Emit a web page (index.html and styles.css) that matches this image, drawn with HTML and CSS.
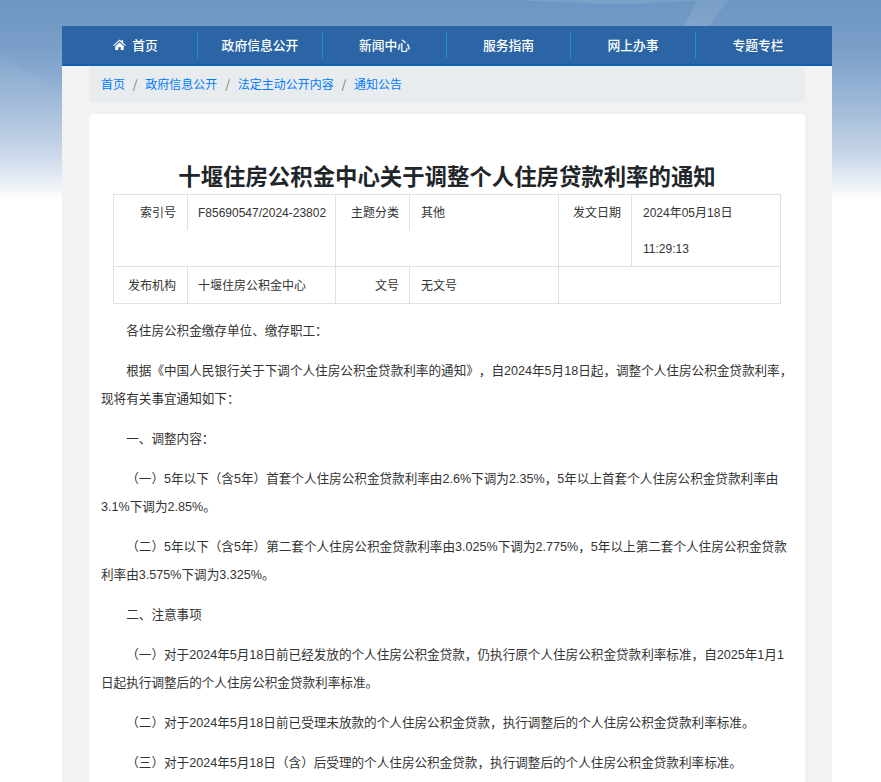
FILE: index.html
```html
<!DOCTYPE html>
<html lang="zh-CN">
<head>
<meta charset="utf-8">
<title>十堰住房公积金中心关于调整个人住房贷款利率的通知</title>
<link rel="stylesheet" href="styles.css">
</head>
<body>
<div class="bg" aria-hidden="true">
<svg width="881" height="200" viewBox="0 0 881 200" preserveAspectRatio="none">
<path class="swoosh" d="M520 0C590 5 650 5 700 0Z"/>
<path class="swoosh" d="M697 0H730C715 15 705 30 698 50H676C682 30 690 15 697 0Z"/>
<path class="swoosh2" d="M0 55C60 90 120 130 190 190H0Z"/>
</svg>
</div>
<div class="wrap">
<nav class="nav">
<a class="nav-item nav-home"><svg class="home" viewBox="0 0 16 14"><path d="M8 0.6 10.6 3V1.6h2v3.2L16 8l-.9 1L8 2.6.9 9 0 8ZM2.6 9.2 8 4.4l5.4 4.8V14H9.6v-3.6H6.4V14H2.6Z"/></svg>首页</a>
<a class="nav-item">政府信息公开</a>
<a class="nav-item">新闻中心</a>
<a class="nav-item">服务指南</a>
<a class="nav-item">网上办事</a>
<a class="nav-item">专题专栏</a>
</nav>
<div class="inner">
<ol class="crumbs">
<li><a>首页</a></li>
<li><a>政府信息公开</a></li>
<li><a>法定主动公开内容</a></li>
<li><a>通知公告</a></li>
</ol>
<article class="card">
<h1 class="title">十堰住房公积金中心关于调整个人住房贷款利率的通知</h1>
<div class="meta">
<div class="cell c1"><span class="k">索引号</span><span class="v">F85690547/2024-23802</span></div>
<div class="cell c2"><span class="k">主题分类</span><span class="v">其他</span></div>
<div class="cell c3"><span class="k">发文日期</span><span class="v">2024年05月18日<br>11:29:13</span></div>
<div class="cell c1"><span class="k">发布机构</span><span class="v">十堰住房公积金中心</span></div>
<div class="cell c2"><span class="k">文号</span><span class="v">无文号</span></div>
<div class="cell c3 empty"></div>
</div>
<div class="body">
<p class="in">各住房公积金缴存单位、缴存职工：</p>
<p class="in">根据《中国人民银行关于下调个人住房公积金贷款利率的通知》，自2024年5月18日起，调整个人住房公积金贷款利率，现将有关事宜通知如下：</p>
<p class="in">一、调整内容：</p>
<p class="in">（一）5年以下（含5年）首套个人住房公积金贷款利率由2.6%下调为2.35%，5年以上首套个人住房公积金贷款利率由3.1%下调为2.85%。</p>
<p class="in">（二）5年以下（含5年）第二套个人住房公积金贷款利率由3.025%下调为2.775%，5年以上第二套个人住房公积金贷款利率由3.575%下调为3.325%。</p>
<p class="in">二、注意事项</p>
<p class="in">（一）对于2024年5月18日前已经发放的个人住房公积金贷款，仍执行原个人住房公积金贷款利率标准，自2025年1月1日起执行调整后的个人住房公积金贷款利率标准。</p>
<p class="in">（二）对于2024年5月18日前已受理未放款的个人住房公积金贷款，执行调整后的个人住房公积金贷款利率标准。</p>
<p class="in">（三）对于2024年5月18日（含）后受理的个人住房公积金贷款，执行调整后的个人住房公积金贷款利率标准。</p>
</div>
</article>
</div>
</div>
</body>
</html>
```
FILE: styles.css
```css
html { overflow: hidden; height: 782px; }
body {
  margin: 0;
  height: 782px;
  overflow: hidden;
  position: relative;
  background: #fff;
  font-family: "Noto Sans CJK SC", "Noto Sans", sans-serif;
  font-size: 12px;
  color: #333;
  text-spacing-trim: space-all;
}
.bg {
  position: absolute;
  inset: 0 0 auto 0;
  height: 200px;
  background: linear-gradient(180deg, #6c96c2 0%, #7a9fc9 25%, #a3bcd9 55%, #c9d7e9 78%, #fff 100%);
}
.bg svg { display: block; }
.swoosh { fill: rgba(255,255,255,.1); }
.swoosh2 { fill: rgba(255,255,255,.05); }
.wrap {
  position: relative;
  width: 770px;
  margin: 26px 0 0 62px;
  background: #f2f2f2;
  min-height: 756px;
}
.nav {
  display: grid;
  grid-template-columns: 124px 125px 124px 124px 125px 1fr;
  background: #2c65a5;
  border-bottom: 2px solid #0d62b0;
  padding: 6px 12px 0 11px;
  height: 32px;
}
.nav-item {
  height: 26px;
  padding-bottom: 2px;
  display: flex;
  align-items: center;
  justify-content: center;
  color: #fff;
  font-size: 12.8px;
  font-weight: 500;
  border-left: 1px solid #1a9bb5;
  box-sizing: border-box;
}
.nav-home { border-left: 0; padding-left: 1px; }
.home { width: 13px; height: 11px; margin-right: 6px; fill: #fff; }
.inner { padding: 0 27px; }
.crumbs {
  list-style: none;
  margin: 0;
  padding: 0 12px 2px;
  height: 36px;
  box-sizing: border-box;
  display: flex;
  align-items: center;
  background: #e9ecef;
  border-radius: 4px;
  color: #6c757d;
}
.crumbs li + li::before { content: "/"; padding: 0 7.8px; color: #6c757d; }
.crumbs a { color: #007bff; }
.card {
  margin-top: 12px;
  background: #fff;
  border-radius: 4px;
  padding: 36px 12px 12px;
}
.title {
  margin: 9px 0 3px;
  font-size: 22.4px;
  line-height: 32px;
  font-weight: 700;
  text-align: center;
  color: #212529;
}
.meta {
  margin: 0 12px;
  display: grid;
  grid-template-columns: 222px 223px 222px;
  border: solid #dee2e6;
  border-width: 1px 0 0 1px;
}
.cell {
  display: flex;
  align-items: flex-start;
  border: solid #dee2e6;
  border-width: 0 1px 1px 0;
  min-height: 36px;
}
.k {
  box-sizing: border-box;
  text-align: right;
  line-height: 36px;
  height: 36px;
  border-right: 1px solid #dee2e6;
}
.v {
  margin: 1px 0 -1px;
  line-height: 36px;
  font-family: "Liberation Sans", "Noto Sans CJK SC", sans-serif;
}
.c1 .k { flex: 0 0 74px; padding-right: 11px; }
.c2 .k { flex: 0 0 74px; padding-right: 10px; }
.c3 .k { flex: 0 0 73px; padding-right: 10px; }
.c1 .v { padding-left: 10px; }
.c2 .v, .c3 .v { padding-left: 11px; }
.cell:nth-child(-n+3) .k { margin-top: -1px; }
.cell:nth-child(-n+3) .v { margin-top: 0; }
.cell:nth-child(3) .k { height: 72px; }
.body { padding-top: 1px; }
.body p {
  margin: 11px 0;
  padding-top: 1px;
  line-height: 28px;
  font-size: 12.6px;
  font-family: "Liberation Sans", "Noto Sans CJK SC", sans-serif;
}
.in { text-indent: 2em; }
```
